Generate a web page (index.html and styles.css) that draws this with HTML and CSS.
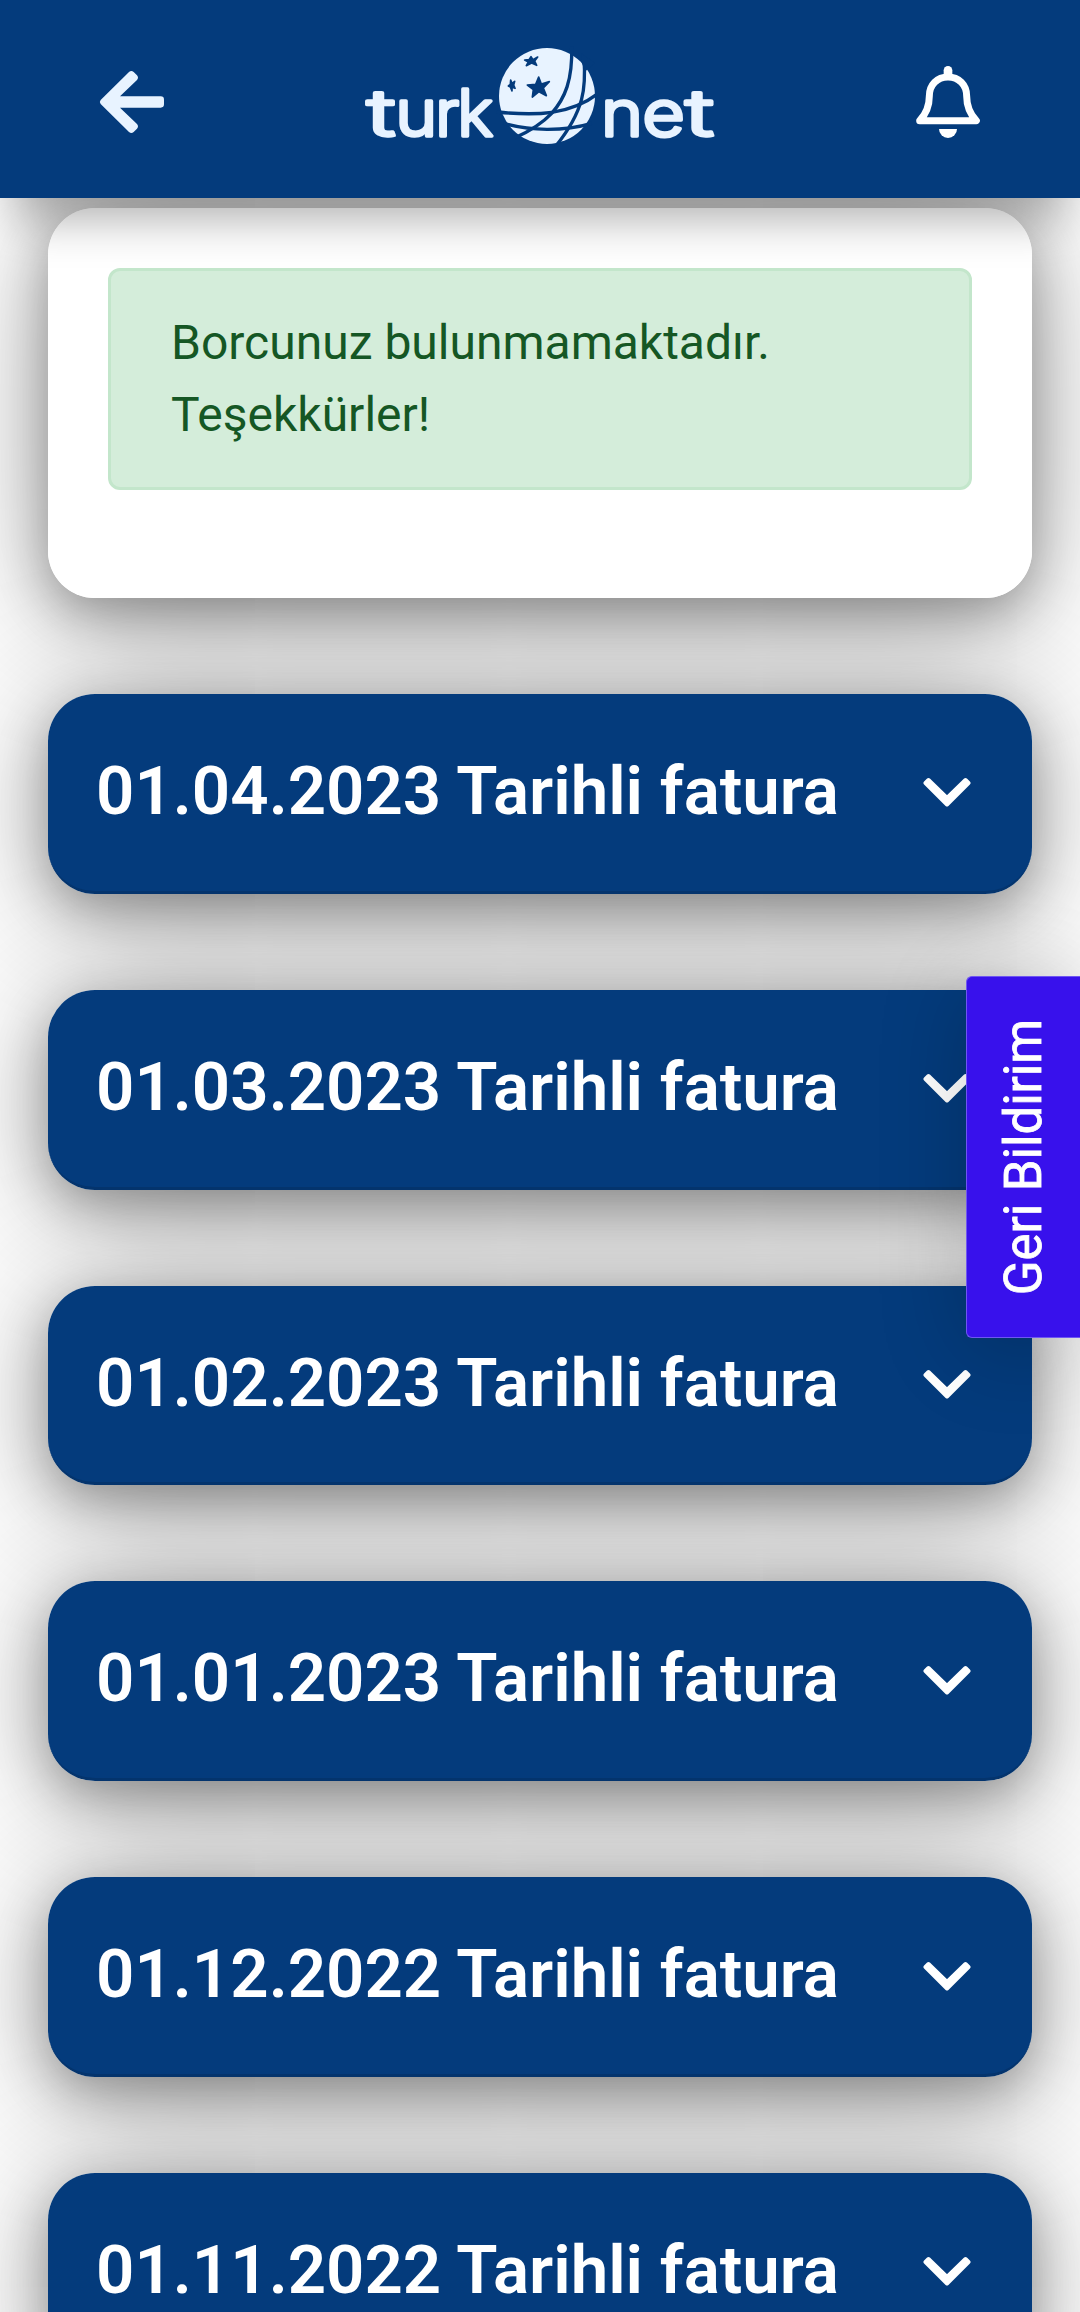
FILE: index.html
```html
<!DOCTYPE html>
<html lang="tr">
<head>
    <meta charset="UTF-8">
    <meta name="viewport" content="width=device-width, initial-scale=1.0">
    <title>TurkNet - Faturalar</title>
    <link rel="stylesheet" href="styles.css">
</head>
<body>
    <header class="navbar">
        <a class="nav-icon" href="#" aria-label="Geri">
            <svg viewBox="0 0 330 330"><path fill="#e8f3ff" d="M62 150 147 66q7-6 14 0l10 10q6 7 0 14l-51 49h122q10 0 10 10v14q0 10-10 10H120l51 49q6 7 0 14l-10 10q-7 6-14 0L62 162q-5-6 0-12z"/></svg>
        </a>
        <svg class="logo" viewBox="0 0 1140 390">
            <g class="logo-text">
                <text x="50" y="317" textLength="86" lengthAdjust="spacingAndGlyphs">t</text>
                <text x="136" y="317" textLength="126" lengthAdjust="spacingAndGlyphs">u</text>
                <text x="256" y="317" textLength="72" lengthAdjust="spacingAndGlyphs">r</text>
                <text x="322" y="317" textLength="108" lengthAdjust="spacingAndGlyphs">k</text>
                <text x="753" y="317" textLength="126" lengthAdjust="spacingAndGlyphs">n</text>
                <text x="877" y="317" textLength="128" lengthAdjust="spacingAndGlyphs">e</text>
                <text x="1006" y="317" textLength="86" lengthAdjust="spacingAndGlyphs">t</text>
            </g>
            <circle cx="591" cy="198" r="144" fill="#e8f3ff"/>
            <g class="globe-lines">
                <path d="M665 50C668 150 645 205 605 250Q565 292 495 323"/>
                <path d="M702 85C708 170 705 240 616 350"/>
                <path d="M440 246C560 258 660 255 745 190"/>
                <path d="M460 280C540 303 640 305 725 280"/>
            </g>
            <path class="notch" d="M694 70 695 98 706 124 735 100z"/>
            <g class="stars">
                <path d="M566 141 574 162 598 155 580 174 589 197 567 185 547 201 550 179 532 165 557 163z"/>
                <path d="M543 80 549 89 563 81 554 93 560 106 545 99 529 107 535 96 524 90 537 89z"/>
                <path d="M482 150 486 160 494 154 491 165 495 175 486 172 486 183 481 171 475 168 481 163z"/>
            </g>
        </svg>
        <a class="nav-icon" href="#" aria-label="Bildirimler">
            <svg viewBox="0 0 330 330">
                <path d="M89 212C112 188 118 165 118 138C118 104 142 81 174 81C206 81 230 104 230 138C230 165 236 188 259 212Z" fill="none" stroke="#fff" stroke-width="21" stroke-linejoin="round"/>
                <path d="M174 61V74" stroke="#fff" stroke-width="26" stroke-linecap="round"/>
                <path d="M147 237H201A27 27 0 0 1 147 237Z" fill="#fff"/>
            </svg>
        </a>
    </header>

    <main class="content">
        <section class="card debt-card">
            <div class="alert">Borcunuz bulunmamaktadır. Teşekkürler!</div>
        </section>

        <div class="card invoice">
            <h5>01.04.2023 Tarihli fatura</h5>
            <svg class="chevron" viewBox="0 0 48 30"><path d="M5.5 3 24 21 42.5 3 45.5 6 24 27.5 2.5 6z"/></svg>
        </div>
        <div class="card invoice">
            <h5>01.03.2023 Tarihli fatura</h5>
            <svg class="chevron" viewBox="0 0 48 30"><path d="M5.5 3 24 21 42.5 3 45.5 6 24 27.5 2.5 6z"/></svg>
        </div>
        <div class="card invoice">
            <h5>01.02.2023 Tarihli fatura</h5>
            <svg class="chevron" viewBox="0 0 48 30"><path d="M5.5 3 24 21 42.5 3 45.5 6 24 27.5 2.5 6z"/></svg>
        </div>
        <div class="card invoice">
            <h5>01.01.2023 Tarihli fatura</h5>
            <svg class="chevron" viewBox="0 0 48 30"><path d="M5.5 3 24 21 42.5 3 45.5 6 24 27.5 2.5 6z"/></svg>
        </div>
        <div class="card invoice">
            <h5>01.12.2022 Tarihli fatura</h5>
            <svg class="chevron" viewBox="0 0 48 30"><path d="M5.5 3 24 21 42.5 3 45.5 6 24 27.5 2.5 6z"/></svg>
        </div>
        <div class="card invoice">
            <h5>01.11.2022 Tarihli fatura</h5>
            <svg class="chevron" viewBox="0 0 48 30"><path d="M5.5 3 24 21 42.5 3 45.5 6 24 27.5 2.5 6z"/></svg>
        </div>
    </main>

    <button class="feedback" type="button"><span>Geri Bildirim</span></button>
</body>
</html>
```
FILE: styles.css
```css
* {
    box-sizing: border-box;
}
body {
    margin: 0;
    height: 2312px;
    overflow: hidden;
    background-color: #fff;
    font-family: Roboto, sans-serif;
    font-size: 48px;
    line-height: 1.5;
}
.navbar {
    position: relative;
    z-index: 5;
    display: flex;
    justify-content: space-between;
    height: 198px;
    padding: 30px 80px 0;
    background-color: #043b7c;
    box-shadow: 0 36px 44px -16px rgba(0,0,0,0.32);
}
.nav-icon {
    width: 110px;
    height: 110px;
    margin-top: 20px;
}
.nav-icon svg {
    display: block;
    width: 110px;
    height: 110px;
}
.logo {
    width: 380px;
    height: 130px;
}
.logo-text {
    font-family: Inter, sans-serif;
    font-size: 192px;
    font-weight: 300;
    fill: #e8f3ff;
    stroke: #e8f3ff;
    stroke-width: 10;
    stroke-linecap: round;
    stroke-linejoin: round;
}
.globe-lines path {
    fill: none;
    stroke: #043b7c;
    stroke-width: 10;
}
.notch {
    fill: #043b7c;
}
.stars path {
    fill: #043b7c;
    stroke: #043b7c;
    stroke-width: 5;
    stroke-linejoin: round;
}
.content {
    position: relative;
    z-index: 1;
    display: flex;
    flex-direction: column;
    gap: 96px;
    padding: 10px 48px 0;
}
.card {
    position: relative;
    border-radius: 47px;
}
/* shadows stay behind every card */
.card::before {
    content: "";
    position: absolute;
    inset: 0;
    z-index: -1;
    border-radius: 47px;
    box-shadow: 0 15px 50px rgba(0,0,0,0.3), 0 14px 140px rgba(0,0,0,0.36);
}
.debt-card {
    height: 390px;
    padding: 60px;
    background-color: #fff;
}
.alert {
    padding: 36px 60px;
    border: 3px solid #c3e6cb;
    border-radius: 12px;
    background-color: #d4edda;
    color: #155724;
}
.invoice {
    display: flex;
    justify-content: space-between;
    align-items: center;
    flex-shrink: 0;
    height: 199.8px;
    padding: 0 61px 2px 48px;
    border-bottom: 3px solid #04346d;
    background-color: #043b7c;
    color: #fff;
}
.invoice::before {
    bottom: -3px;
}
.invoice h5 {
    margin: 0;
    font-size: 67.2px;
    font-weight: 600;
    white-space: nowrap;
}
.chevron {
    width: 48px;
    height: 30px;
    margin-top: 2px;
}
.chevron path {
    fill: #fff;
    stroke: #fff;
    stroke-width: 4;
    stroke-linejoin: round;
}
.feedback {
    position: fixed;
    top: 976px;
    right: 0;
    z-index: 4;
    display: flex;
    align-items: center;
    justify-content: center;
    width: 114px;
    height: 362px;
    padding: 0;
    border: 1px solid #6f56f2;
    border-right: 0;
    border-radius: 6px 0 0 6px;
    background-color: #3811ec;
    box-shadow: 0 12px 90px rgba(0,0,0,0.2);
    color: #fff;
    font-family: Roboto, sans-serif;
    font-size: 51px;
    -webkit-text-stroke: 0.8px #fff;
}
.feedback span {
    writing-mode: vertical-rl;
    transform: rotate(180deg);
    white-space: nowrap;
}
```
